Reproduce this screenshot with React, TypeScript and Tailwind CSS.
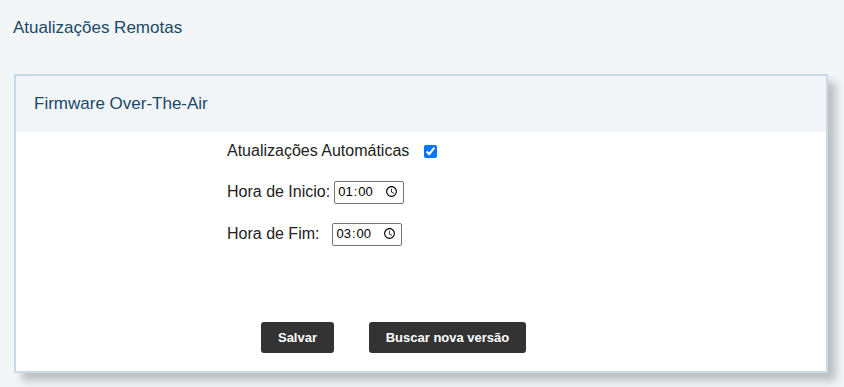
import React from "react";

export default function App() {
  return (
    <div
      className="w-[844px] h-[387px] bg-[#f2f6f7] overflow-hidden"
      style={{ fontFamily: '"Liberation Sans", Arial, sans-serif' }}
    >
      <div className="pl-[13px] pt-[15px] h-[74px] text-[17px] text-[#1a4868]">
        Atualizações Remotas
      </div>

      <div className="mx-[14px] w-[814px] border-2 border-[#c8dae7] bg-white shadow-[8px_8px_8px_rgba(0,0,0,0.22)]">
        <div className="h-[56px] bg-[#f1f5f7] flex items-center pl-[18px] text-[17px] text-[#1a4868]">
          Firmware Over-The-Air
        </div>

        <div className="pl-[211px] pt-[8px] text-[16px] text-[#222]">
          <div className="flex items-center h-[22px]">
            <span>Atualizações Automáticas</span>
            <input
              type="checkbox"
              defaultChecked
              className="ml-[15px] w-[13px] h-[13px] accent-[#0075ff]"
            />
          </div>

          <div className="flex items-center mt-[18px] h-[24px]">
            <span>Hora de Inicio:</span>
            <input
              type="time"
              defaultValue="01:00"
              className="ml-[4px] w-[70px] h-[23px] border border-[#767676] rounded-[2px] px-[2px] text-[13px] text-black"
            />
          </div>

          <div className="flex items-center mt-[18px] h-[24px]">
            <span>Hora de Fim:</span>
            <input
              type="time"
              defaultValue="03:00"
              className="ml-[13px] w-[70px] h-[23px] border border-[#767676] rounded-[2px] px-[2px] text-[13px] text-black"
            />
          </div>
        </div>

        <div className="flex pl-[245px] pt-[76px] pb-[18px] gap-[35px]">
          <button className="h-[31px] w-[73px] bg-[#333] text-white text-[13px] font-bold rounded-[3px]">
            Salvar
          </button>
          <button className="h-[31px] w-[157px] bg-[#333] text-white text-[13px] font-bold rounded-[3px]">
            Buscar nova versão
          </button>
        </div>
      </div>
    </div>
  );
}
